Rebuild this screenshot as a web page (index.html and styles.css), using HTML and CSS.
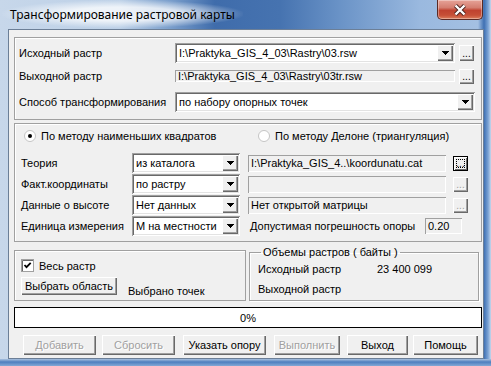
FILE: index.html
```html
<!DOCTYPE html>
<html lang="ru">
<head>
    <meta charset="UTF-8">
    <title>Трансформирование растровой карты</title>
    <link rel="stylesheet" href="styles.css">
</head>
<body>
<div class="window">
    <div class="titlebar">
        <span class="title">Трансформирование растровой карты</span>
        <div class="close-btn">
            <svg width="14" height="12" viewBox="0 0 14 12">
                <path d="M2.5 1.5 L11.5 10.5 M11.5 1.5 L2.5 10.5" stroke="#4a2420" stroke-width="4.2" fill="none"/>
                <path d="M2.5 1.5 L11.5 10.5 M11.5 1.5 L2.5 10.5" stroke="#fff" stroke-width="2.4" fill="none"/>
            </svg>
        </div>
    </div>

    <div class="client">
        <!-- source / output raster -->
        <div class="panel files">
            <div class="row r1">
                <span class="label">Исходный растр</span>
                <div class="combo src">
                    <span class="val">I:\Praktyka_GIS_4_03\Rastry\03.rsw</span>
                    <span class="drop"><svg width="7" height="4" viewBox="0 0 7 4"><path d="M0 0h7v1h-1v1h-1v1h-1v1h-1v-1h-1v-1h-1v-1h-1z"/></svg></span>
                </div>
                <div class="btn dots">...</div>
            </div>
            <div class="row r2">
                <span class="label">Выходной растр</span>
                <div class="edit ro out">I:\Praktyka_GIS_4_03\Rastry\03tr.rsw</div>
                <div class="btn dots">...</div>
            </div>
            <div class="row r3">
                <span class="label">Способ трансформирования</span>
                <div class="combo method">
                    <span class="val">по набору опорных точек</span>
                    <span class="drop"><svg width="7" height="4" viewBox="0 0 7 4"><path d="M0 0h7v1h-1v1h-1v1h-1v1h-1v-1h-1v-1h-1v-1h-1z"/></svg></span>
                </div>
            </div>
        </div>

        <!-- method parameters -->
        <div class="panel params">
            <div class="radios">
                <span class="radio r-lsq">
                    <svg width="12" height="12" viewBox="0 0 12 12"><circle cx="6" cy="6" r="5.5" fill="#fff" stroke="#c4c4c4"/><circle cx="6" cy="6" r="2" fill="#000"/></svg>
                    По методу наименьших квадратов
                </span>
                <span class="radio r-del">
                    <svg width="12" height="12" viewBox="0 0 12 12"><circle cx="6" cy="6" r="5.5" fill="#fff" stroke="#c4c4c4"/></svg>
                    По методу Делоне (триангуляция)
                </span>
            </div>
            <div class="prows">
                <div class="prow">
                    <span class="plabel">Теория</span>
                    <div class="combo small">
                        <span class="val">из каталога</span>
                        <span class="drop"><svg width="7" height="4" viewBox="0 0 7 4"><path d="M0 0h7v1h-1v1h-1v1h-1v1h-1v-1h-1v-1h-1v-1h-1z"/></svg></span>
                    </div>
                    <div class="edit ro file">I:\Praktyka_GIS_4..\koordunatu.cat</div>
                    <div class="btn dots pdots focus">...</div>
                </div>
                <div class="prow">
                    <span class="plabel">Факт.координаты</span>
                    <div class="combo small">
                        <span class="val">по растру</span>
                        <span class="drop"><svg width="7" height="4" viewBox="0 0 7 4"><path d="M0 0h7v1h-1v1h-1v1h-1v1h-1v-1h-1v-1h-1v-1h-1z"/></svg></span>
                    </div>
                    <div class="edit ro file"></div>
                    <div class="btn dots pdots disabled">...</div>
                </div>
                <div class="prow">
                    <span class="plabel">Данные о высоте</span>
                    <div class="combo small">
                        <span class="val">Нет данных</span>
                        <span class="drop"><svg width="7" height="4" viewBox="0 0 7 4"><path d="M0 0h7v1h-1v1h-1v1h-1v1h-1v-1h-1v-1h-1v-1h-1z"/></svg></span>
                    </div>
                    <div class="edit ro file">Нет открытой матрицы</div>
                    <div class="btn dots pdots disabled">...</div>
                </div>
                <div class="prow">
                    <span class="plabel">Единица измерения</span>
                    <div class="combo small">
                        <span class="val">М на местности</span>
                        <span class="drop"><svg width="7" height="4" viewBox="0 0 7 4"><path d="M0 0h7v1h-1v1h-1v1h-1v1h-1v-1h-1v-1h-1v-1h-1z"/></svg></span>
                    </div>
                    <span class="tol-label">Допустимая погрешность опоры</span>
                    <div class="edit ro tol">0.20</div>
                </div>
            </div>
        </div>

        <div class="bottom">
            <div class="panel area">
                <div class="check-row">
                    <svg width="13" height="13" viewBox="0 0 13 13">
                        <rect x="0.5" y="0.5" width="12" height="12" fill="#fff" stroke="#a0a0a0"/>
                        <path d="M1.5 12 V1.5 H12" stroke="#696969" fill="none"/>
                        <path d="M3.5 6 L5.5 8.2 L9.7 3.8" stroke="#000" stroke-width="1.8" fill="none"/>
                    </svg>
                    <span>Весь растр</span>
                </div>
                <div class="area-row">
                    <div class="btn pick">Выбрать область</div>
                    <span class="picked">Выбрано точек</span>
                </div>
            </div>
            <fieldset class="sizes">
                <legend>Объемы растров ( байты )</legend>
                <div class="size-row"><span class="size-name">Исходный растр</span><span>23 400 099</span></div>
                <div class="size-row"><span class="size-name">Выходной растр</span></div>
            </fieldset>
        </div>

        <div class="progress">0%</div>

        <div class="actions">
            <div class="btn act add disabled">Добавить</div>
            <div class="btn act reset disabled">Сбросить</div>
            <div class="btn act point">Указать опору</div>
            <div class="btn act run disabled">Выполнить</div>
            <div class="btn act exit">Выход</div>
            <div class="btn act help">Помощь</div>
        </div>
    </div>
</div>
</body>
</html>
```

FILE: styles.css
```css
* {
    box-sizing: border-box;
}

body {
    margin: 0;
    font-family: "Liberation Sans", Arial, sans-serif;
    font-size: 11px;
    color: #000;
    background: #fff;
}

/* Aero window frame */
.window {
    width: 491px;
    height: 366px;
    overflow: hidden;
    background:
        linear-gradient(to bottom, transparent 359px, #a9c1de 359px, #4d7ebf 362px, #83a8d6 366px),
        linear-gradient(90deg, #c7d7ea 0px, #bcd0e7 120px, #7b9fcc 170px, #3f6cab 215px, #4673b0 280px, #6a93c7 340px, #9ab9df 420px, #a4c0e2 478px, #3f70b3 484px, #7aa2d4 488px, #c5d7ec 491px);
}

.titlebar {
    height: 29px;
    display: flex;
    justify-content: space-between;
    align-items: flex-start;
}

.title {
    margin-left: 2px;
    height: 28px;
    padding: 6px 8px 0;
    font-family: "Noto Sans", "Open Sans", sans-serif;
    font-size: 12px;
    background: radial-gradient(ellipse at center, rgba(255,255,255,0.75) 35%, rgba(255,255,255,0) 72%);
}

.close-btn {
    width: 46px;
    height: 20px;
    margin-right: 8px;
    border: 1px solid #5b2a24;
    border-top: none;
    border-radius: 0 0 5px 5px;
    background: linear-gradient(#e6a398, #d47e70 40%, #c0422f 55%, #c64f36 80%, #dc7d5c);
    box-shadow: inset 0 0 0 1px rgba(255,255,255,0.35);
    display: flex;
    align-items: center;
    justify-content: center;
}

/* client area */
.client {
    margin: 0 7px 0 8px;
    height: 330px;
    border: 1px solid #6c7f97;
    background: #f0f0f0;
    padding: 7px 1px 0 5px;
}

.panel {
    border: 1px solid #a0a0a0;
    box-shadow: inset 1px 1px #fff;
}

/* 3d helpers */
.combo,
.edit {
    box-shadow: inset 1px 1px #a0a0a0, inset -1px -1px #fff, inset 2px 2px #696969, inset -2px -2px #e3e3e3;
}

.edit.ro {
    background: #f0f0f0;
    box-shadow: inset 1px 1px #a0a0a0, inset -1px -1px #fff;
}

.btn,
.drop {
    background: #f0f0f0;
    box-shadow: inset 1px 1px #fff, inset -1px -1px #696969, inset -2px -2px #a0a0a0;
}

.combo {
    height: 100%;
    background: #fff;
    display: flex;
    align-items: center;
    padding: 2px;
}

.combo .val {
    flex: 1;
    padding-left: 2px;
    white-space: nowrap;
    overflow: hidden;
}

.drop {
    width: 16px;
    height: 100%;
    display: flex;
    align-items: center;
    justify-content: center;
}

.edit {
    display: flex;
    align-items: center;
    padding: 0 3px;
    white-space: nowrap;
    overflow: hidden;
    background: #fff;
}

.btn {
    display: flex;
    align-items: center;
    justify-content: center;
    white-space: nowrap;
}

.btn.disabled {
    color: #a0a0a0;
    text-shadow: 1px 1px #fff;
}

.dots {
    width: 15px;
    height: 16px;
    margin-left: 4px;
    font-size: 10px;
    align-items: flex-end;
    padding-bottom: 3px;
    line-height: 8px;
}

/* top panel */
.files {
    height: 83px;
    padding: 5px 0 0 4px;
}

.row {
    display: flex;
    align-items: center;
}

.r1 {
    height: 20px;
}

.r2 {
    height: 18px;
    margin-top: 4px;
}

.r3 {
    height: 20px;
    margin-top: 7px;
}

.label {
    width: 156px;
}

.src,
.out {
    width: 280px;
}

.r2 .dots {
    height: 15px;
}

.method {
    width: 300px;
}

/* parameters panel */
.params {
    height: 119px;
    margin-top: 3px;
    padding-top: 5px;
}

.radios {
    display: flex;
    height: 14px;
    align-items: center;
}

.radio {
    display: flex;
    align-items: center;
    gap: 5px;
}

.r-lsq {
    margin-left: 9px;
    width: 234px;
}

.prows {
    margin-top: 10px;
}

.prow {
    display: flex;
    align-items: center;
    height: 20px;
    margin-top: 1px;
}

.prow:first-child {
    margin-top: 0;
}

.plabel {
    width: 117px;
    padding-left: 6px;
}

.small {
    width: 108px;
}

.file {
    width: 198px;
    height: 17px;
    margin-left: 8px;
}

.pdots {
    width: 15px;
    height: 15px;
    margin-left: 7px;
}

.focus {
    box-shadow: inset 0 0 0 1px #000, inset 2px 2px #fff, inset -2px -2px #696969;
    outline: 1px dotted #000;
    outline-offset: -4px;
}

.tol-label {
    width: 185px;
    padding-left: 10px;
    white-space: nowrap;
}

.tol {
    width: 37px;
    height: 16px;
}

/* bottom section */
.bottom {
    display: flex;
    align-items: flex-start;
    margin-top: 3px;
}

.area {
    width: 232px;
    height: 51px;
    margin-top: 5px;
    padding: 8px 0 0 6px;
}

.check-row {
    display: flex;
    align-items: center;
    gap: 5px;
    height: 13px;
}

.area-row {
    display: flex;
    align-items: flex-end;
    margin-top: 5px;
}

.pick {
    width: 96px;
    height: 18px;
}

.picked {
    margin-left: 11px;
    margin-bottom: -2px;
}

.sizes {
    width: 230px;
    height: 56px;
    margin: 0 0 0 3px;
    padding: 0 0 0 8px;
    border: 1px solid #a0a0a0;
    box-shadow: 1px 1px #fff, inset 1px 1px #fff;
    min-width: 0;
}

.sizes legend {
    margin-left: 3px;
    padding: 0 2px;
    line-height: 14px;
}

.size-row {
    display: flex;
    height: 20px;
    align-items: center;
}

.size-name {
    width: 119px;
}

.progress {
    width: 468px;
    height: 21px;
    margin-top: 6px;
    border: 1px solid #000;
    background: #fff;
    display: flex;
    align-items: center;
    justify-content: center;
}

/* action buttons */
.actions {
    display: flex;
    height: 20px;
    margin-top: 7px;
}

.act {
    height: 20px;
}

.add {
    width: 73px;
    margin-left: 9px;
}

.reset {
    width: 73px;
    margin-left: 6px;
}

.point {
    width: 83px;
    margin-left: 8px;
}

.run {
    width: 66px;
    margin-left: 8px;
}

.exit {
    width: 61px;
    margin-left: 7px;
}

.help {
    width: 65px;
    margin-left: 5px;
}
```
